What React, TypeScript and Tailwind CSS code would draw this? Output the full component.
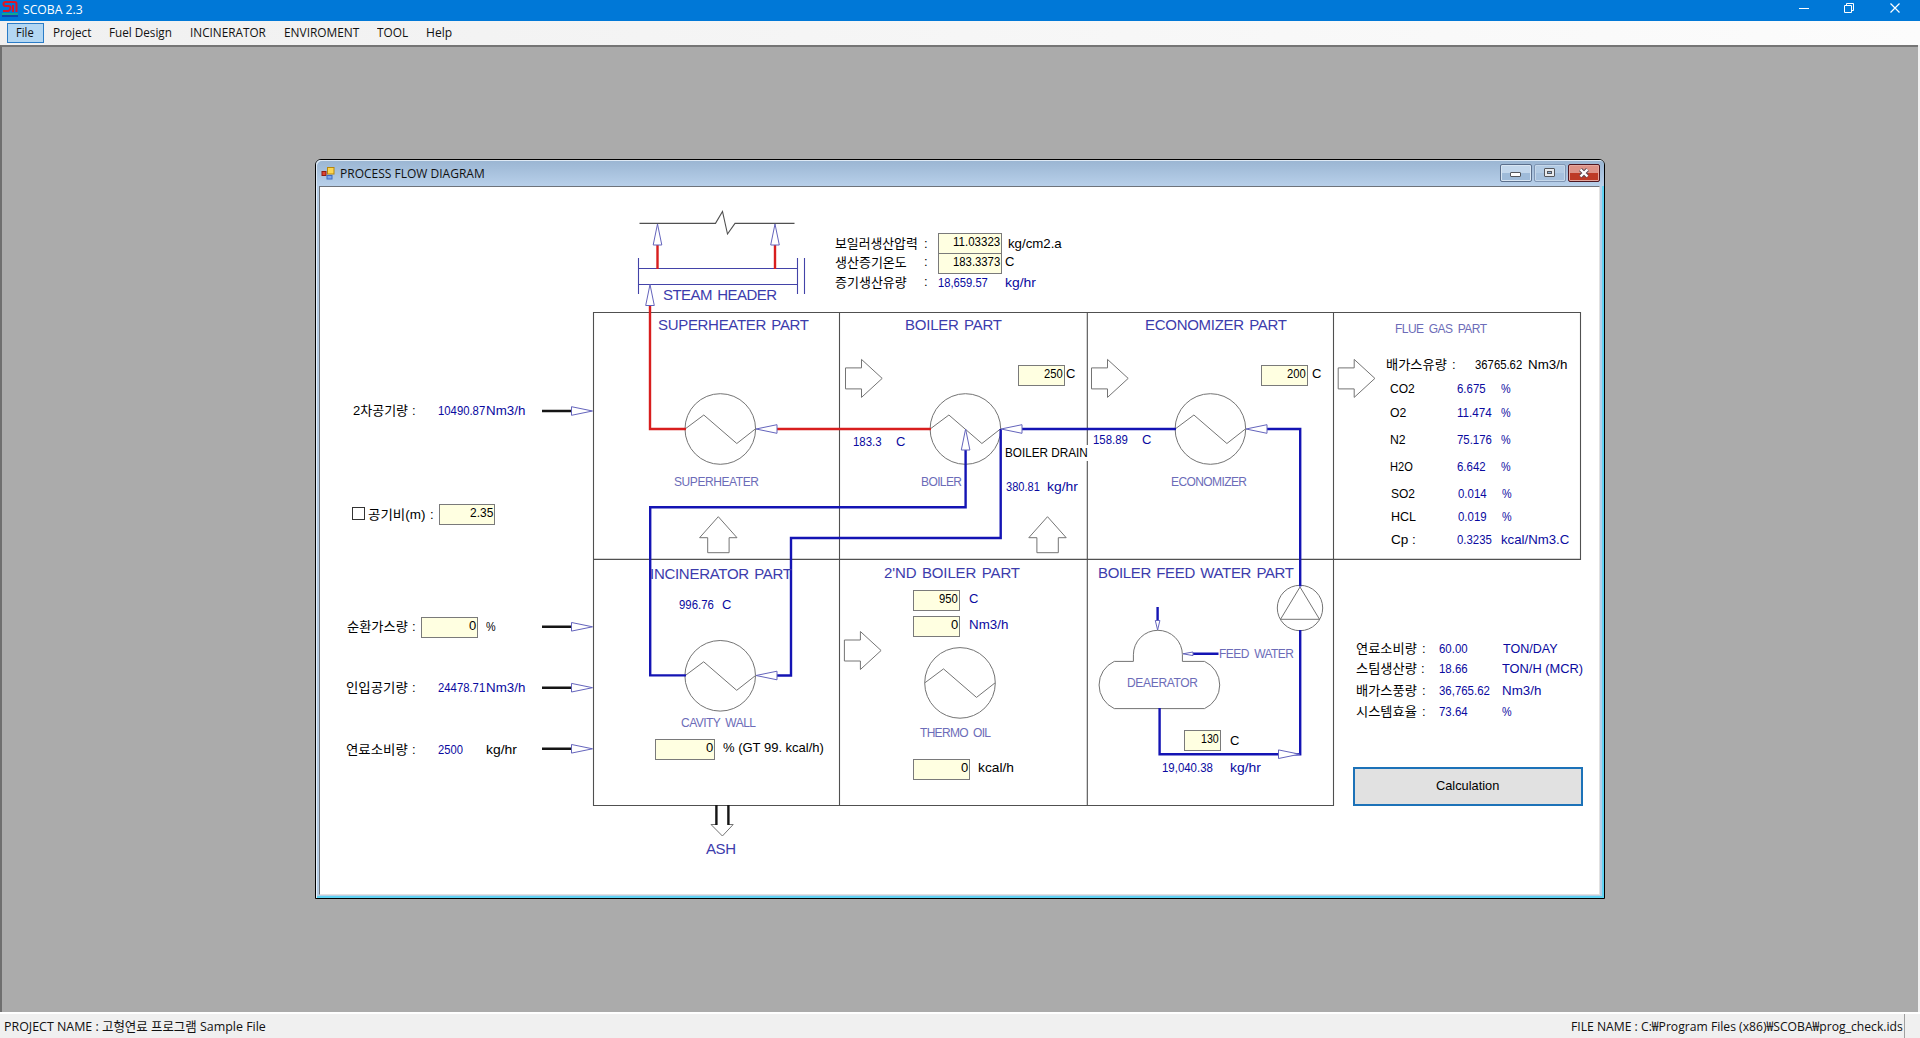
import React, { useLayoutEffect, useRef, useState } from "react";

const OX = 320;
const OY = 187;

/** Text condensed or widened to a given advance width. */
function Fit({ text, w }: { text: string; w: number }) {
  const ref = useRef<HTMLSpanElement>(null);
  const [scale, setScale] = useState(1);
  useLayoutEffect(() => {
    if (ref.current) setScale(w / ref.current.offsetWidth);
  }, [text, w]);
  return (
    <span className="inline-block overflow-visible whitespace-pre" style={{ width: w }}>
      <span ref={ref} className="inline-block origin-left whitespace-pre" style={{ transform: `scaleX(${scale})` }}>
        {text}
      </span>
    </span>
  );
}

type L = [text: string, x: number, cy: number, w: number];

const blackLabels: L[] = [
  ["보일러생산압력", 835, 243.5, 83],
  [":", 924, 243.5, 4],
  ["생산증기온도", 835, 262, 72],
  [":", 924, 261.5, 4],
  ["증기생산유량", 835, 282, 72],
  [":", 924, 281.5, 4],
  ["kg/cm2.a", 1008, 243.5, 54],
  ["C", 1005, 261.5, 9],
  ["C", 1066, 373.5, 9],
  ["C", 1312, 373.5, 9],
  ["배가스유량", 1386, 364, 61],
  [":", 1452, 364, 4],
  ["36765.62", 1475, 364, 47],
  ["Nm3/h", 1528, 364, 39],
  ["CO2", 1390, 388, 25],
  ["O2", 1390, 412, 16],
  ["N2", 1390, 439, 16],
  ["H2O", 1390, 466, 23],
  ["SO2", 1391, 493, 24],
  ["HCL", 1391, 516, 25],
  ["Cp :", 1391, 539, 25],
  ["2차공기량", 353, 410, 55],
  [":", 412, 410, 4],
  ["공기비(m)", 368, 514, 57],
  [":", 430, 514, 4],
  ["순환가스량", 347, 626, 61],
  [":", 412, 626, 4],
  ["%", 486, 626, 10],
  ["인입공기량", 346, 687, 62],
  [":", 412, 687, 4],
  ["연료소비량", 346, 749, 62],
  [":", 412, 749, 4],
  ["kg/hr", 486, 749, 31],
  ["% (GT 99. kcal/h)", 723, 747, 101],
  ["kcal/h", 978, 767, 36],
  ["C", 1230, 740.5, 9],
  ["연료소비량", 1356, 648, 61],
  [":", 1422, 648, 4],
  ["스팀생산량", 1356, 668, 61],
  [":", 1421, 668, 4],
  ["배가스풍량", 1356, 690, 61],
  [":", 1422, 690, 4],
  ["시스템효율", 1356, 711, 61],
  [":", 1422, 711, 4],
];

const blueLabels: L[] = [
  ["18,659.57", 938, 282, 50],
  ["kg/hr", 1005, 282, 31],
  ["183.3", 853, 441, 29],
  ["C", 896, 441, 9],
  ["380.81", 1006, 486, 34],
  ["kg/hr", 1047, 486, 31],
  ["158.89", 1093, 439, 35],
  ["C", 1142, 439, 9],
  ["6.675", 1457, 388, 29],
  ["%", 1501, 388, 10],
  ["11.474", 1457, 412, 35],
  ["%", 1501, 412, 10],
  ["75.176", 1457, 439, 35],
  ["%", 1501, 439, 10],
  ["6.642", 1457, 466, 29],
  ["%", 1501, 466, 10],
  ["0.014", 1458, 493, 29],
  ["%", 1502, 493, 10],
  ["0.019", 1458, 516, 29],
  ["%", 1502, 516, 10],
  ["0.3235", 1457, 539, 35],
  ["kcal/Nm3.C", 1501, 539, 68],
  ["10490.87", 438, 410, 47],
  ["Nm3/h", 486, 410, 39],
  ["24478.71", 438, 687, 47],
  ["Nm3/h", 486, 687, 39],
  ["2500", 438, 749, 25],
  ["996.76", 679, 604, 35],
  ["C", 722, 604, 9],
  ["C", 969, 598, 9],
  ["Nm3/h", 969, 624, 39],
  ["19,040.38", 1162, 767, 51],
  ["kg/hr", 1230, 767, 31],
  ["60.00", 1439, 648, 29],
  ["TON/DAY", 1503, 648, 55],
  ["18.66", 1439, 668, 29],
  ["TON/H (MCR)", 1502, 668, 81],
  ["36,765.62", 1439, 690, 51],
  ["Nm3/h", 1502, 690, 39],
  ["73.64", 1439, 711, 29],
  ["%", 1502, 711, 10],
];

type F = [text: string, x: number, y: number, w: number, textWidth: number];

const fields: F[] = [
  ["11.03323", 938, 233, 64, 47],
  ["183.3373", 938, 253, 64, 47],
  ["250", 1018, 365, 47, 19],
  ["200", 1261, 365, 47, 19],
  ["2.35", 439, 504, 56, 23],
  ["0", 421, 617, 57, 7],
  ["0", 655, 739, 60, 7],
  ["950", 913, 590, 47, 19],
  ["0", 913, 616, 47, 7],
  ["0", 913, 759, 57, 7],
  ["130", 1184, 730, 37, 18],
];

/** x, baseline, width */
const captions: [string, number, number, number][] = [
  ["STEAM HEADER", 663, 300, 114],
  ["SUPERHEATER PART", 658, 330, 151],
  ["BOILER PART", 905, 330, 97],
  ["ECONOMIZER PART", 1145, 330, 142],
  ["INCINERATOR PART", 650, 578.5, 142],
  ["2'ND BOILER PART", 884, 578, 136],
  ["BOILER FEED WATER PART", 1098, 578, 196],
  ["ASH", 706, 854, 30],
];

const smallCaptions: [string, number, number, number][] = [
  ["FLUE GAS PART", 1395, 332.5, 92],
  ["SUPERHEATER", 674, 486, 85],
  ["BOILER", 921, 486, 41],
  ["ECONOMIZER", 1171, 486, 76],
  ["CAVITY WALL", 681, 727, 75],
  ["THERMO OIL", 920, 737, 71],
  ["DEAERATOR", 1127, 686.5, 71],
  ["FEED WATER", 1219, 658, 75],
];

function Label({ item, className }: { item: L; className: string }) {
  const [text, x, cy, w] = item;
  return (
    <div className={`absolute h-4 ${className}`} style={{ left: x - OX, top: Math.round(cy - 7.5) - OY }}>
      <Fit text={text} w={w} />
    </div>
  );
}

function Exchanger({ x, y }: { x: number; y: number }) {
  return (
    <g transform={`translate(${x} ${y})`}>
      <circle r="35.3" />
      <path d="M-35-.2L-16.5-14L16.5 14.5L35 0" />
    </g>
  );
}

function BlockArrow({ x, y, up = false }: { x: number; y: number; up?: boolean }) {
  return up ? (
    <path transform={`translate(${x} ${y})`} d="M0 0L18.7 21H10.8V36H-10.6V21H-18.7Z" />
  ) : (
    <path transform={`translate(${x} ${y})`} d="M0-10.5H16V-19L36.7 0L16 19V10.5H0Z" />
  );
}

/** Slim arrow head whose tip lies at (x, y); dir is the heading in degrees. */
function Head({ x, y, dir, len = 21, half = 4.3 }: { x: number; y: number; dir: number; len?: number; half?: number }) {
  return <path transform={`translate(${x} ${y}) rotate(${dir})`} d={`M0 0L${-len} ${-half}V${half}Z`} />;
}

function Drawing() {
  return (
    <svg className="absolute inset-0" width="1280" height="707" viewBox="320 187 1280 707" fill="none">
      <g stroke="#505050" strokeWidth="1.1">
        <path d="M593.5 312.5H1580.5V559.4H593.5M593.5 312V805.5H1333.5V312M839.5 312V805.5M1087.3 312V805.5" />
        <path d="M639.5 223.4H715.5L722.5 211.5L727.5 234L735 223.4H794.5" />
      </g>
      <g stroke="#747474" strokeWidth="1">
        <Exchanger x={720.3} y={429} />
        <Exchanger x={965.4} y={429} />
        <Exchanger x={1210.4} y={429} />
        <Exchanger x={720.2} y={675.8} />
        <Exchanger x={960} y={682.9} />
        <BlockArrow x={845.5} y={378.4} />
        <BlockArrow x={1091.5} y={378.4} />
        <BlockArrow x={1338.2} y={378.4} />
        <BlockArrow x={844.4} y={650.5} />
        <BlockArrow x={718.3} y={516.7} up />
        <BlockArrow x={1047.5} y={516.7} up />
        <circle cx="1300" cy="608" r="22.7" />
        <path d="M1300 587L1319.5 619.3H1280.5Z" />
        <path d="M1133.4 661.4V654.8A24.5 24.5 0 0 1 1182.4 654.8V661.4H1204.5A25.9 25.9 0 0 1 1204.5 708.6H1114.3A25.9 25.9 0 0 1 1114.3 661.4Z" />
        <path d="M716 824.5H711L722.4 836L733.2 824.5H728" />
      </g>
      <g stroke="#4343a8" strokeWidth="1.1">
        <path d="M638.5 268.5H797.5M638.5 284.5H797.5M638.5 258V294M797.5 258V294M804.5 258V294" />
      </g>
      <g stroke="#d81e1e" strokeWidth="2.4">
        <path d="M657.5 244V269M775 244V269M650 305V429H686M776 429H931" />
      </g>
      <g stroke="#1414b4" strokeWidth="2.4">
        <path d="M965.6 449.5V507.3H650.2V675.4H686" />
        <path d="M1000.7 429V538H791V675.5H776" />
        <path d="M1021.5 429H1176M1266.5 429H1300.2V586.5M1300.2 630V754.3H1159.6V708" />
        <path d="M1157.6 607V620.5M1218.5 653.8H1192" />
      </g>
      <g stroke="#151515" strokeWidth="2.4">
        <path d="M542 411H571.5M542 626.8H571.5M542 687.7H571.5M542 748.8H571.5" />
        <path d="M716.4 805V825M728.4 805V825" />
      </g>
      <g stroke="#6464bc" strokeWidth="1" fill="#fff">
        <Head x={657.5} y={224} dir={-90} />
        <Head x={775} y={224} dir={-90} />
        <Head x={650} y={284.5} dir={-90} />
        <Head x={756} y={429} dir={180} />
        <Head x={1001} y={429} dir={180} />
        <Head x={1246} y={429} dir={180} />
        <Head x={965.6} y={429} dir={-90} />
        <Head x={756} y={675.5} dir={180} />
        <Head x={1299.5} y={754.2} dir={0} />
        <Head x={1157.6} y={630} dir={90} len={9.5} half={2.3} />
        <Head x={1183} y={653.8} dir={180} len={10} half={1.8} />
        <Head x={592.5} y={411} dir={0} />
        <Head x={592.5} y={626.8} dir={0} />
        <Head x={592.5} y={687.7} dir={0} />
        <Head x={592.5} y={748.8} dir={0} />
      </g>
      <g className="font-['Liberation_Sans',sans-serif]">
        {captions.map(([t, x, y, w]) => (
          <text key={t} x={x} y={y} textLength={w} fontSize="15" wordSpacing="1.5" fill="#3c3cac">
            {t}
          </text>
        ))}
        {smallCaptions.map(([t, x, y, w]) => (
          <text key={t} x={x} y={y} textLength={w} fontSize="12" wordSpacing="2.5" fill="#6c6cb8">
            {t}
          </text>
        ))}
      </g>
    </svg>
  );
}

function ChildWindow() {
  return (
    <section className="absolute left-[315px] top-[112px] flex h-[740px] w-[1290px] flex-col rounded-t-[6px] border border-black bg-[#b7cfe8] shadow-[inset_1px_1px_0_#e8f1fa,inset_-2px_-2px_0_#5fd3f3]">
      <header className="flex h-[26px] shrink-0 items-center rounded-t-[5px] bg-gradient-to-b from-[#9ab5d2] to-[#b8d0ea] pl-[5px] pr-1 shadow-[inset_1px_1px_0_#dfeaf5]">
        <svg width="14" height="14" viewBox="0 0 14 14" className="mr-[5px]">
          <rect x="6.5" y="1.5" width="6.5" height="6.5" fill="#fbd653" stroke="#b8860b" />
          <rect x="1" y="5.5" width="4" height="4" fill="#dd4332" stroke="#8f1d12" />
          <rect x="6" y="9.5" width="5" height="3.5" fill="#7ba6ee" stroke="#3f6bc2" />
        </svg>
        <span className="flex-1 text-[13px] leading-4 text-[#111]">
          <Fit text="PROCESS FLOW DIAGRAM" w={145} />
        </span>
        <div className="flex gap-[2px]">
          <button className="flex h-[18px] w-8 items-center justify-center rounded-[2px] border border-[#5b6f8c] bg-gradient-to-b from-[#c3d7ec] from-50% to-[#9fbbd9] to-50% shadow-[inset_0_0_0_1px_#d9e6f3]">
            <span className="mr-px mt-[3px] h-[5px] w-[11px] rounded-[1px] border border-[#53565c] bg-white" />
          </button>
          <button className="flex h-[18px] w-8 items-center justify-center rounded-[2px] border border-[#8096b4] bg-gradient-to-b from-[#b3cbe4] from-50% to-[#a6c1de] to-50% shadow-[inset_0_0_0_1px_#c6d8ea]">
            <span className="mb-px mr-[2px] flex h-[9px] w-[11px] items-center justify-center rounded-[1px] border border-[#53565c] bg-[#e8ebee]">
              <span className="h-[3px] w-[5px] border border-[#53565c] bg-[#8fb3d8]" />
            </span>
          </button>
          <button className="flex h-[18px] w-8 items-center justify-center rounded-[2px] border border-[#4f1620] bg-gradient-to-b from-[#dd9287] from-50% to-[#bd3a26] to-50% shadow-[inset_0_0_0_1px_#e5a79e]">
            <svg width="12" height="10" viewBox="0 0 12 10" className="mb-px mr-px">
              <path d="M2.5 1.5L9.5 8.5M9.5 1.5L2.5 8.5" stroke="#5a4a55" strokeWidth="4.2" />
              <path d="M2.5 1.5L9.5 8.5M9.5 1.5L2.5 8.5" stroke="#fff" strokeWidth="2.4" />
            </svg>
          </button>
        </div>
      </header>
      <div className="relative mb-[3px] ml-[3px] mr-[4px] flex-1 border-b border-l border-r border-t border-b-[#e2e2e2] border-l-[#6e737a] border-r-[#e2e2e2] border-t-[#6e737a] bg-white font-['Liberation_Sans','Noto_Sans_CJK_KR',sans-serif] text-[13px] leading-4">
        <Drawing />
        {blackLabels.map((l, i) => (
          <Label key={i} item={l} className="text-black" />
        ))}
        {blueLabels.map((l, i) => (
          <Label key={i} item={l} className="text-[#0a0aa0]" />
        ))}
        <Label item={["BOILER DRAIN", 1005, 452.5, 83]} className="bg-white text-black" />
        {fields.map(([t, x, y, w, tw], i) => (
          <div
            key={i}
            className="absolute flex h-[21px] justify-end border border-[#7a7a7a] bg-[#ffffe1] pr-[1px] text-black"
            style={{ left: x - OX, top: y - OY, width: w }}
          >
            <Fit text={t} w={tw} />
          </div>
        ))}
        <span className="absolute left-[32px] top-[320px] size-[13px] border border-[#333] bg-white" />
        <button className="absolute left-[1033px] top-[580px] h-[39px] w-[230px] border-2 border-[#1c72b8] bg-[#e1e1e1] pb-[2px] pr-[2px] text-black">
          <Fit text="Calculation" w={63} />
        </button>
      </div>
    </section>
  );
}

const menu: [string, number][] = [
  ["Project", 38],
  ["Fuel Design", 63],
  ["INCINERATOR", 76],
  ["ENVIROMENT", 75],
  ["TOOL", 31],
  ["Help", 26],
];

export default function App() {
  return (
    <div className="flex h-[1038px] w-[1920px] flex-col overflow-hidden bg-[#f0f0f0] font-['Open_Sans','Noto_Sans_CJK_KR',sans-serif] text-[13px] leading-4 text-[#111]">
      <header className="flex h-[21px] shrink-0 items-center justify-between bg-[#0078d7] text-white">
        <div className="flex h-full items-start pl-[2px]">
          <svg width="16" height="17" viewBox="0 0 16 17" fill="none" className="mr-[5px] shrink-0">
            <path d="M8 2H3.5Q1.5 2 1.5 4T3.5 6H6.5Q8.5 6 8.5 8T6.5 11H1M8 2H12.5Q14.5 2 14.5 4V12M11 5V12" stroke="#dc1428" strokeWidth="2" />
            <path d="M0 14H16" stroke="#19c06a" strokeWidth="1.3" />
            <path d="M0 16H16" stroke="#152a9a" strokeWidth="1.3" />
          </svg>
          <span className="pt-[1px]">
            <Fit text="SCOBA 2.3" w={60} />
          </span>
        </div>
        <svg width="130" height="21" viewBox="1790 0 130 21" fill="none" stroke="#fff" strokeWidth="1">
          <path d="M1799 8.5H1809" />
          <path d="M1844.5 5.5H1851.5V12.5H1844.5ZM1846.5 5.5V3.5H1853.5V10.5H1851.5" />
          <path d="M1890.5 3.5L1899.5 12.5M1899.5 3.5L1890.5 12.5" strokeWidth="1.2" />
        </svg>
      </header>
      <nav className="flex h-6 shrink-0 items-center bg-gradient-to-r from-[#f0f0f0] to-[#fcfcfc] pl-[7px]">
        <span className="flex h-5 w-[37px] items-center justify-center border border-[#2a7cc7] bg-[#b3d7f3] pb-[2px] pr-px">
          <Fit text="File" w={18} />
        </span>
        <div className="flex gap-[18.2px] pb-[2px] pl-[8.5px]">
          {menu.map(([t, w]) => (
            <Fit key={t} text={t} w={w} />
          ))}
        </div>
      </nav>
      <main className="relative mr-[2px] h-[967px] shrink-0 border-l-2 border-t-2 border-l-[#6f6f6f] border-t-[#757575] bg-[#ababab]">
        <div className="absolute -left-[2px] top-0">
          <ChildWindow />
        </div>
      </main>
      <footer className="flex flex-1 items-center justify-between border-t-2 border-t-white pl-1 pr-[15px]">
        <Fit text="PROJECT NAME : 고형연료 프로그램 Sample File" w={262} />
        <div className="flex h-full items-center border-r border-[#a0a0a0]">
          <Fit text="FILE NAME : C:₩Program Files (x86)₩SCOBA₩prog_check.ids" w={332} />
          <span className="w-px" />
        </div>
      </footer>
    </div>
  );
}
